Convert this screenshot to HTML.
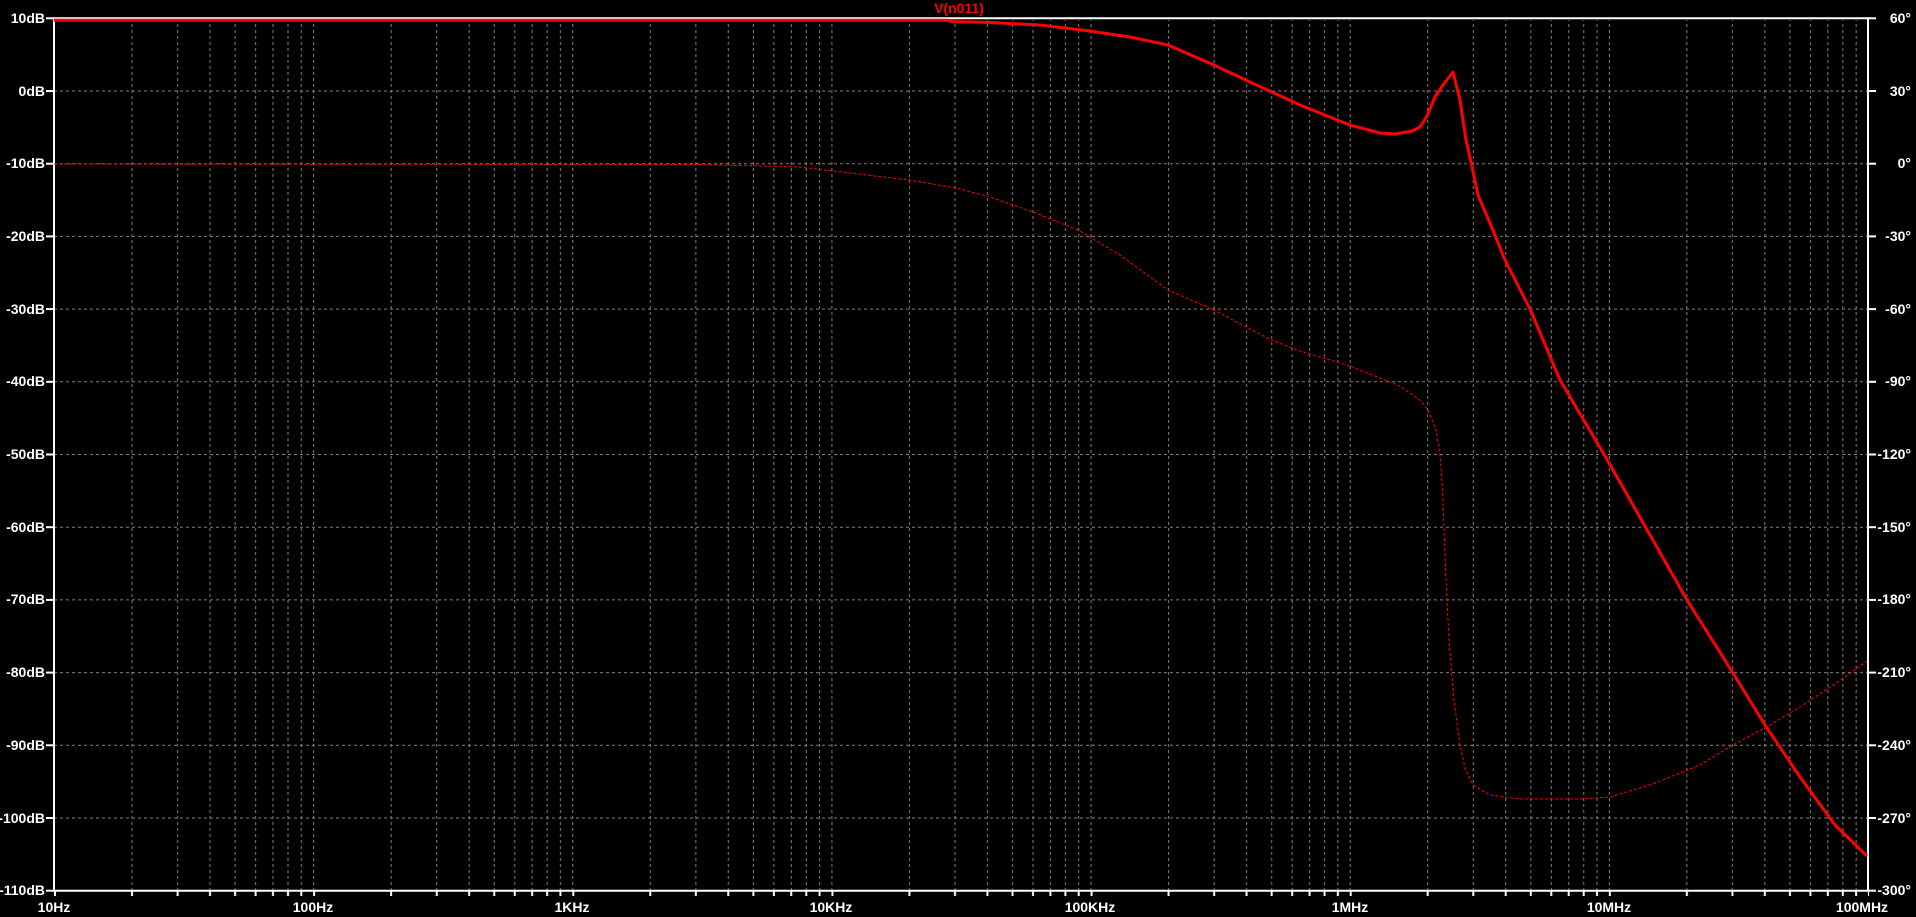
<!DOCTYPE html>
<html><head><meta charset="utf-8"><style>
html,body{margin:0;padding:0;background:#000;width:1916px;height:917px;overflow:hidden}
svg{display:block}
text{font-family:"Liberation Sans",sans-serif;font-size:14px;font-weight:bold;fill:#fff}
</style></head><body>
<svg width="1916" height="917" viewBox="0 0 1916 917">
<defs>
<pattern id="vg" patternUnits="userSpaceOnUse" x="54" y="0" width="259.14" height="917">
<g stroke="#808080" stroke-width="1" stroke-dasharray="3 3">
<line x1="0.5" y1="0" x2="0.5" y2="917"/>
<line x1="78" y1="0" x2="78" y2="917"/>
<line x1="123.6" y1="0" x2="123.6" y2="917"/>
<line x1="156" y1="0" x2="156" y2="917"/>
<line x1="181.1" y1="0" x2="181.1" y2="917"/>
<line x1="201.6" y1="0" x2="201.6" y2="917"/>
<line x1="219" y1="0" x2="219" y2="917"/>
<line x1="234" y1="0" x2="234" y2="917"/>
<line x1="247.3" y1="0" x2="247.3" y2="917"/>
</g>
</pattern>
<pattern id="tk" patternUnits="userSpaceOnUse" x="54" y="0" width="259.14" height="917">
<g stroke="#fff" stroke-width="2">
<line x1="1" y1="0" x2="1" y2="917"/>
<line x1="78" y1="0" x2="78" y2="917"/>
<line x1="123.6" y1="0" x2="123.6" y2="917"/>
<line x1="156" y1="0" x2="156" y2="917"/>
<line x1="181.1" y1="0" x2="181.1" y2="917"/>
<line x1="201.6" y1="0" x2="201.6" y2="917"/>
<line x1="219" y1="0" x2="219" y2="917"/>
<line x1="234" y1="0" x2="234" y2="917"/>
<line x1="247.3" y1="0" x2="247.3" y2="917"/>
</g>
</pattern>
</defs>
<rect x="54" y="20" width="1814" height="870" fill="url(#vg)"/>
<rect x="54" y="891" width="1815" height="5" fill="url(#tk)"/>
<g stroke="#808080" stroke-width="1" stroke-dasharray="3 3">
<line x1="54" x2="1868" y1="91" y2="91"/>
<line x1="54" x2="1868" y1="163.7" y2="163.7"/>
<line x1="54" x2="1868" y1="236.4" y2="236.4"/>
<line x1="54" x2="1868" y1="309.1" y2="309.1"/>
<line x1="54" x2="1868" y1="381.8" y2="381.8"/>
<line x1="54" x2="1868" y1="454.5" y2="454.5"/>
<line x1="54" x2="1868" y1="527.2" y2="527.2"/>
<line x1="54" x2="1868" y1="599.9" y2="599.9"/>
<line x1="54" x2="1868" y1="672.6" y2="672.6"/>
<line x1="54" x2="1868" y1="745.3" y2="745.3"/>
<line x1="54" x2="1868" y1="818" y2="818"/>
</g>
<g stroke="#fff" stroke-width="2">
<line x1="53" x2="1869" y1="18.3" y2="18.3"/>
<line x1="53" x2="1869" y1="890.7" y2="890.7"/>
<line x1="54" x2="54" y1="18" y2="891"/>
<line x1="1868" x2="1868" y1="18" y2="891"/>
</g>
<g stroke="#fff" stroke-width="2">
<line x1="46" x2="54" y1="18.3" y2="18.3"/><line x1="46" x2="54" y1="91" y2="91"/><line x1="46" x2="54" y1="163.7" y2="163.7"/><line x1="46" x2="54" y1="236.4" y2="236.4"/><line x1="46" x2="54" y1="309.1" y2="309.1"/><line x1="46" x2="54" y1="381.8" y2="381.8"/><line x1="46" x2="54" y1="454.5" y2="454.5"/><line x1="46" x2="54" y1="527.2" y2="527.2"/><line x1="46" x2="54" y1="599.9" y2="599.9"/><line x1="46" x2="54" y1="672.6" y2="672.6"/><line x1="46" x2="54" y1="745.3" y2="745.3"/><line x1="46" x2="54" y1="818" y2="818"/><line x1="46" x2="54" y1="890.7" y2="890.7"/>
<line x1="1868" x2="1876" y1="18.3" y2="18.3"/><line x1="1868" x2="1876" y1="91" y2="91"/><line x1="1868" x2="1876" y1="163.7" y2="163.7"/><line x1="1868" x2="1876" y1="236.4" y2="236.4"/><line x1="1868" x2="1876" y1="309.1" y2="309.1"/><line x1="1868" x2="1876" y1="381.8" y2="381.8"/><line x1="1868" x2="1876" y1="454.5" y2="454.5"/><line x1="1868" x2="1876" y1="527.2" y2="527.2"/><line x1="1868" x2="1876" y1="599.9" y2="599.9"/><line x1="1868" x2="1876" y1="672.6" y2="672.6"/><line x1="1868" x2="1876" y1="745.3" y2="745.3"/><line x1="1868" x2="1876" y1="818" y2="818"/><line x1="1868" x2="1876" y1="890.7" y2="890.7"/>
</g>
<g text-anchor="end">
<text x="45" y="23">10dB</text><text x="45" y="96">0dB</text><text x="45" y="168">-10dB</text><text x="45" y="241">-20dB</text><text x="45" y="314">-30dB</text><text x="45" y="386">-40dB</text><text x="45" y="459">-50dB</text><text x="45" y="532">-60dB</text><text x="45" y="604">-70dB</text><text x="45" y="677">-80dB</text><text x="45" y="750">-90dB</text><text x="45" y="823">-100dB</text><text x="45" y="895">-110dB</text>
<text x="1911" y="23">60°</text><text x="1911" y="96">30°</text><text x="1911" y="168">0°</text><text x="1911" y="241">-30°</text><text x="1911" y="314">-60°</text><text x="1911" y="386">-90°</text><text x="1911" y="459">-120°</text><text x="1911" y="532">-150°</text><text x="1911" y="604">-180°</text><text x="1911" y="677">-210°</text><text x="1911" y="750">-240°</text><text x="1911" y="823">-270°</text><text x="1911" y="895">-300°</text>
</g>
<g text-anchor="middle">
<text x="54" y="912">10Hz</text><text x="313" y="912">100Hz</text><text x="572" y="912">1KHz</text><text x="831" y="912">10KHz</text><text x="1090" y="912">100KHz</text><text x="1350" y="912">1MHz</text><text x="1609" y="912">10MHz</text><text x="1862" y="912">100MHz</text>
<text x="959" y="13" style="fill:#ff0000">V(n011)</text>
</g>
<g fill="none" stroke="#ff0000">
<polyline stroke-width="1" stroke-dasharray="3 2" points="54,164 700,164.5 800,167 909,180 956,188 987,196 1033,212 1078,230 1120,255 1168,290 1214,310 1271,340 1300,351 1350,366 1400,386 1420,400 1428,410 1436,430 1440,455 1442,480 1444,527 1446,580 1449,640 1454,700 1460,745 1465,768 1473,785 1490,795 1520,799 1580,799 1610,797 1650,785 1700,765 1733,745 1770,725 1800,707 1835,684 1867,661"/>
<polyline stroke-width="3" stroke-linejoin="round" points="54,20.3 949,20.3 951,21.5 991,22.5 1040,25 1090,31 1130,37 1168,45 1214,65 1250,82 1300,105 1350,125 1380,133 1395,134 1412,131 1420,127 1427,116 1435,97 1443,85 1453,72 1460,100 1466,140 1471,162 1478,195 1492,228 1505,260 1530,309 1560,380 1605,456 1650,535 1687,600 1733,673 1765,725 1800,777 1835,825 1867,856"/>
</g>
</svg>
</body></html>
